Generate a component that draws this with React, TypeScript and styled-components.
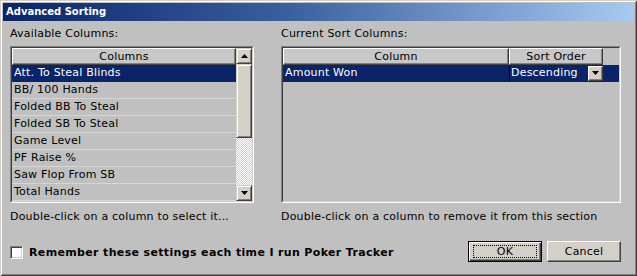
import React from "react";
import styled, { createGlobalStyle } from "styled-components";

const Global = createGlobalStyle`
  html, body { margin: 0; padding: 0; background: #c0c0c0; }
  body { font-family: "DejaVu Sans", Verdana, sans-serif; font-size: 11px; letter-spacing: 0.2px; color: #000; }
`;

const Window = styled.div`
  width: 637px;
  height: 276px;
  box-sizing: border-box;
  background: #c0c0c0;
  padding: 3px;
  box-shadow: inset 1px 1px 0 #d4d0c8, inset -1px -1px 0 #404040,
    inset 2px 2px 0 #ffffff, inset -2px -2px 0 #808080;
  display: flex;
  flex-direction: column;
`;

const TitleBar = styled.div`
  height: 18px;
  flex: none;
  background: linear-gradient(to right, #0a246a, #3a5f9e 45%, #a6caf0);
  color: #fff;
  font-weight: bold;
  font-size: 10px;
  letter-spacing: 0;
  line-height: 18px;
  padding-left: 3px;
`;

const Body = styled.div`
  padding: 6px 13px 10px 7px;
  display: flex;
  flex-direction: column;
`;

const Panels = styled.div`
  display: flex;
  gap: 27px;
`;

const Panel = styled.div<{ $w: number }>`
  width: ${(p) => p.$w}px;
  display: flex;
  flex-direction: column;
`;

const Label = styled.div`
  line-height: 14px;
  height: 14px;
  white-space: nowrap;
`;

const Hint = styled(Label)`
  margin-top: 7px;
`;

const Box = styled.div`
  margin-top: 5px;
  height: 157px;
  box-sizing: border-box;
  border: 1px solid;
  border-color: #808080 #ffffff #ffffff #808080;
  display: flex;
`;

const BoxInner = styled.div`
  flex: 1;
  border: 1px solid;
  border-color: #404040 #d4d0c8 #d4d0c8 #404040;
  display: flex;
  min-width: 0;
`;

const Grid = styled.div`
  flex: 1;
  display: flex;
  flex-direction: column;
  min-width: 0;
`;

const HeaderRow = styled.div`
  display: flex;
  height: 17px;
  flex: none;
`;

const HeaderCell = styled.div<{ $w?: number }>`
  ${(p) => (p.$w ? `width: ${p.$w}px; flex: none;` : "flex: 1;")}
  box-sizing: border-box;
  height: 17px;
  line-height: 15px;
  text-align: center;
  background: #c8c8c8;
  border: 1px solid;
  border-color: #ffffff #404040 #404040 #ffffff;
  box-shadow: inset -1px -1px 0 #808080;
  white-space: nowrap;
`;

const Row = styled.div<{ $sel?: boolean }>`
  height: 17px;
  flex: none;
  box-sizing: border-box;
  display: flex;
  line-height: 16px;
  background: ${(p) => (p.$sel ? "#0a246a" : "transparent")};
  color: ${(p) => (p.$sel ? "#fff" : "#000")};
  border-bottom: 1px solid ${(p) => (p.$sel ? "#0a246a" : "#d6d6d6")};
`;

const Cell = styled.div<{ $w?: number }>`
  ${(p) => (p.$w ? `width: ${p.$w}px; flex: none;` : "flex: 1;")}
  box-sizing: border-box;
  padding-left: 2px;
  white-space: nowrap;
  overflow: hidden;
`;

const SortCell = styled(Cell)`
  display: flex;
  align-items: center;
  border-left: 1px solid #000;
  padding-left: 1px;
  padding-right: 0;
`;

const ComboText = styled.div`
  flex: 1;
`;

const ComboButton = styled.div`
  width: 15px;
  height: 15px;
  box-sizing: border-box;
  background: #d4d0c8;
  border-left: 1px solid #ffffff;
  border-top: 1px solid #ffffff;
  border-right: 1px solid #404040;
  border-bottom: 1px solid #404040;
  box-shadow: inset -1px -1px 0 #808080;
  display: flex;
  align-items: center;
  justify-content: center;
`;

const Scrollbar = styled.div`
  width: 16px;
  flex: none;
  display: flex;
  flex-direction: column;
`;

const ScrollButton = styled.div`
  height: 16px;
  flex: none;
  box-sizing: border-box;
  background: #d4d0c8;
  border: 1px solid;
  border-color: #d4d0c8 #404040 #404040 #d4d0c8;
  box-shadow: inset 1px 1px 0 #ffffff, inset -1px -1px 0 #808080;
  display: flex;
  align-items: center;
  justify-content: center;
`;

const Thumb = styled(ScrollButton)<{ $h: number }>`
  height: ${(p) => p.$h}px;
`;

const Track = styled.div`
  flex: 1;
  background-color: #ffffff;
  background-image: repeating-conic-gradient(#d4d0c8 0 25%, #ffffff 0 50%);
  background-size: 2px 2px;
`;

const Bottom = styled.div`
  margin-top: 17px;
  display: flex;
  align-items: center;
  height: 21px;
`;

const CheckRow = styled.label`
  display: flex;
  align-items: center;
  gap: 6px;
  font-weight: bold;
  letter-spacing: 0.35px;
  flex: 1;
  margin-top: 1px;
`;

const CheckBox = styled.span`
  width: 13px;
  height: 13px;
  box-sizing: border-box;
  background: #fff;
  border: 1px solid;
  border-color: #808080 #ffffff #ffffff #808080;
  box-shadow: inset 1px 1px 0 #404040, inset -1px -1px 0 #d4d0c8;
`;

const Buttons = styled.div`
  display: flex;
  gap: 5px;
`;

const Button = styled.button<{ $default?: boolean }>`
  width: 74px;
  height: 21px;
  box-sizing: border-box;
  padding: 0;
  font-family: inherit;
  font-size: 11px;
  letter-spacing: 0.2px;
  color: #000;
  background: #d4d0c8;
  border: 1px solid;
  border-color: ${(p) =>
    p.$default ? "#000" : "#ffffff #404040 #404040 #ffffff"};
  box-shadow: ${(p) =>
    p.$default
      ? "inset 1px 1px 0 #ffffff, inset -1px -1px 0 #404040, inset -2px -2px 0 #808080"
      : "inset -1px -1px 0 #808080"};
  display: flex;
  align-items: center;
  justify-content: center;
`;

const Focus = styled.span`
  box-sizing: border-box;
  width: 64px;
  height: 13px;
  line-height: 11px;
  border: 1px dotted #000;
  text-align: center;
`;

const Arrow = ({ up }: { up?: boolean }) => (
  <svg width="7" height="4" viewBox="0 0 7 4">
    <path d={up ? "M3.5 0 L7 4 L0 4 Z" : "M0 0 L7 0 L3.5 4 Z"} fill="#000" />
  </svg>
);

const items = [
  "Att. To Steal Blinds",
  "BB/ 100 Hands",
  "Folded BB To Steal",
  "Folded SB To Steal",
  "Game Level",
  "PF Raise %",
  "Saw Flop From SB",
  "Total Hands",
];

export default function App() {
  return (
    <>
      <Global />
      <Window>
        <TitleBar>Advanced Sorting</TitleBar>
        <Body>
          <Panels>
            <Panel $w={244}>
              <Label>Available Columns:</Label>
              <Box>
                <BoxInner>
                  <Grid>
                    <HeaderRow>
                      <HeaderCell>Columns</HeaderCell>
                    </HeaderRow>
                    {items.map((t, i) => (
                      <Row key={t} $sel={i === 0}>
                        <Cell>{t}</Cell>
                      </Row>
                    ))}
                  </Grid>
                  <Scrollbar>
                    <ScrollButton>
                      <Arrow up />
                    </ScrollButton>
                    <Thumb $h={74} />
                    <Track />
                    <ScrollButton>
                      <Arrow />
                    </ScrollButton>
                  </Scrollbar>
                </BoxInner>
              </Box>
              <Hint>Double-click on a column to select it...</Hint>
            </Panel>
            <Panel $w={340}>
              <Label>Current Sort Columns:</Label>
              <Box>
                <BoxInner>
                  <Grid>
                    <HeaderRow>
                      <HeaderCell $w={226}>Column</HeaderCell>
                      <HeaderCell $w={94}>Sort Order</HeaderCell>
                    </HeaderRow>
                    <Row $sel>
                      <Cell $w={226}>Amount Won</Cell>
                      <SortCell $w={94}>
                        <ComboText>Descending</ComboText>
                        <ComboButton>
                          <Arrow />
                        </ComboButton>
                      </SortCell>
                    </Row>
                  </Grid>
                </BoxInner>
              </Box>
              <Hint>Double-click on a column to remove it from this section</Hint>
            </Panel>
          </Panels>
          <Bottom>
            <CheckRow>
              <CheckBox />
              Remember these settings each time I run Poker Tracker
            </CheckRow>
            <Buttons>
              <Button $default>
                <Focus>OK</Focus>
              </Button>
              <Button>Cancel</Button>
            </Buttons>
          </Bottom>
        </Body>
      </Window>
    </>
  );
}
